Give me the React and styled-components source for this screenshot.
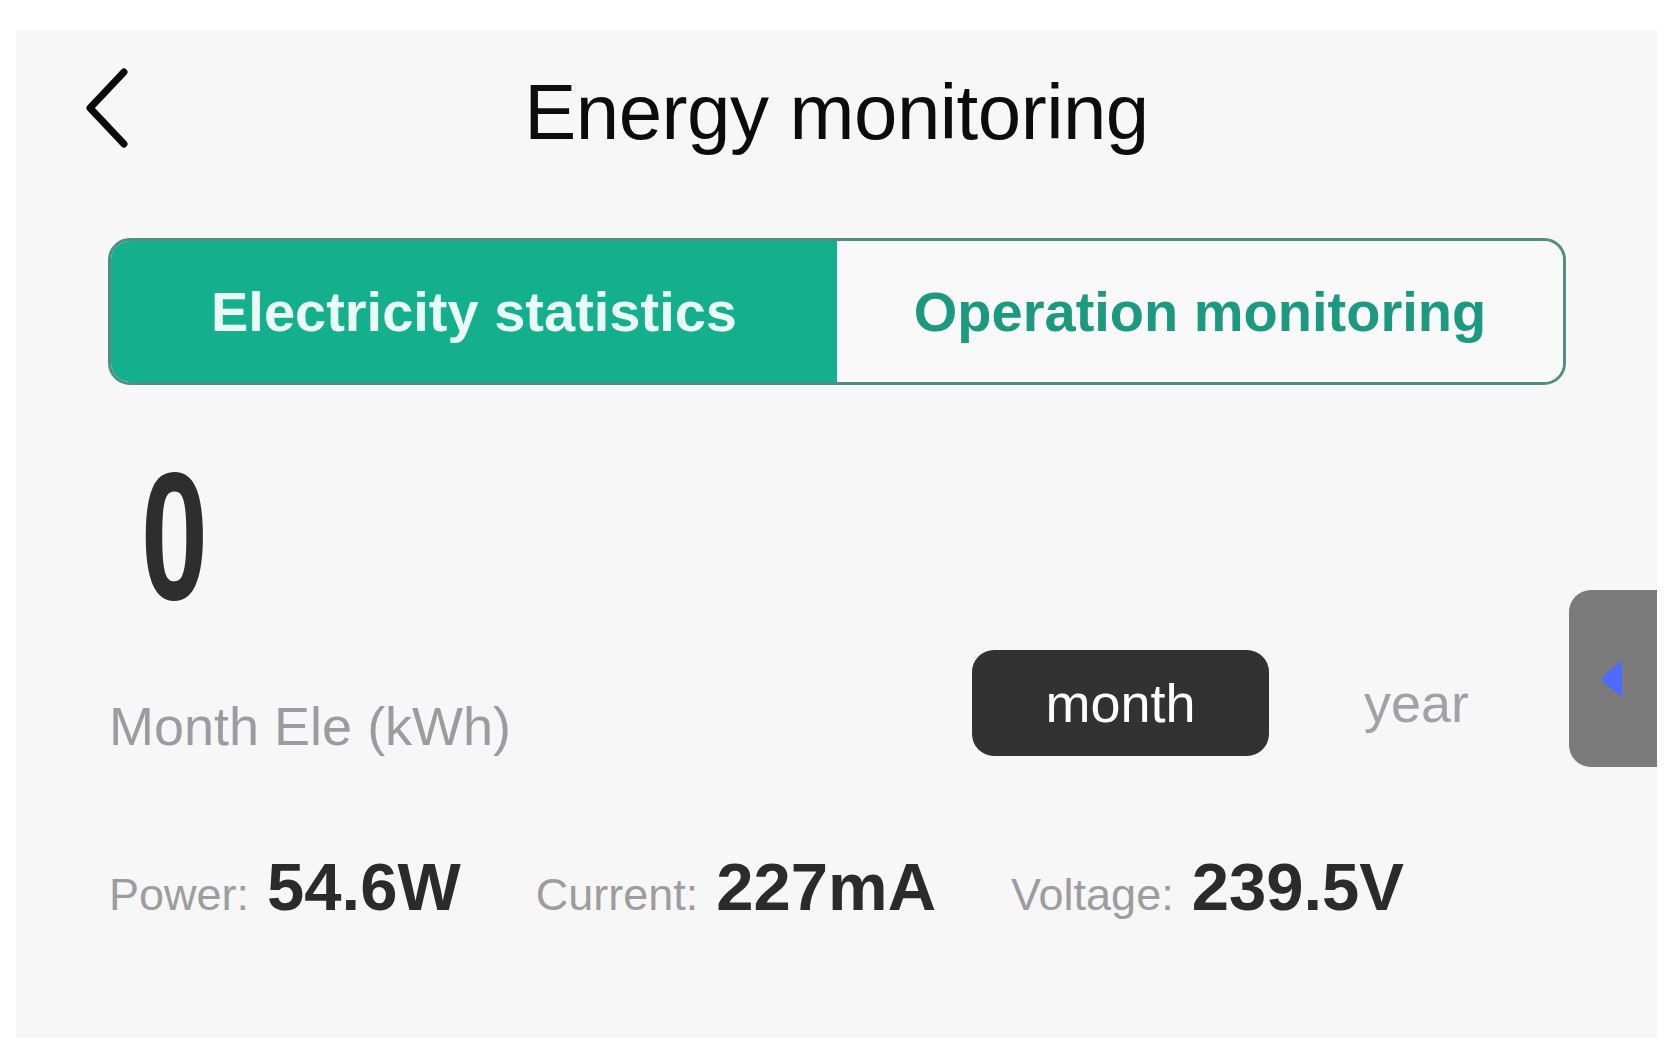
import styled, { createGlobalStyle } from "styled-components";

const GlobalStyle = createGlobalStyle`
  html, body {
    margin: 0;
    padding: 0;
    background: #ffffff;
    font-family: "Liberation Sans", Arial, sans-serif;
  }
`;

const stats = [
  { label: "Power:", value: "54.6W" },
  { label: "Current:", value: "227mA" },
  { label: "Voltage:", value: "239.5V" },
];

const App = () => {
  return (
    <>
      <GlobalStyle />
      <Panel>
        <Header>
          <BackButton aria-label="back">
            <svg width="46" height="80" viewBox="0 0 46 80">
              <polyline
                points="40,4 6,40 40,76"
                fill="none"
                stroke="#0a0a0a"
                strokeWidth="7"
                strokeLinecap="round"
                strokeLinejoin="round"
              />
            </svg>
          </BackButton>
          <Title>Energy monitoring</Title>
          <span />
        </Header>

        <Content>
          <Tabs>
            <Tab $active>Electricity statistics</Tab>
            <Tab>Operation monitoring</Tab>
          </Tabs>

          <BigValue>0</BigValue>

          <PeriodRow>
            <UnitLabel>Month Ele (kWh)</UnitLabel>
            <RangeGroup>
              <RangeButton $active>month</RangeButton>
              <RangeButton>year</RangeButton>
            </RangeGroup>
          </PeriodRow>

          <StatsRow>
            {stats.map((s) => (
              <Stat key={s.label}>
                <StatLabel>{s.label}</StatLabel>
                <StatValue>{s.value}</StatValue>
              </Stat>
            ))}
          </StatsRow>
        </Content>

        <SideHandle>
          <svg width="24" height="40" viewBox="0 0 24 40">
            <path d="M22 2 C12 10 2 17 2 20 C2 23 12 30 22 38 Z" fill="#4d6bfe" />
          </svg>
        </SideHandle>
      </Panel>
    </>
  );
};

export default App;

// Styles
const Panel = styled.div`
  position: relative;
  margin: 30px 18px 0 16px;
  width: 1641px;
  height: 1008px;
  background: #f7f7f7;
  box-sizing: border-box;
`;

const Header = styled.div`
  display: grid;
  grid-template-columns: 1fr auto 1fr;
  align-items: start;
  padding-top: 43px;
`;

const BackButton = styled.div`
  padding-left: 68px;
  margin-top: -5px;
  display: flex;
`;

const Title = styled.h1`
  margin: 0;
  font-size: 78px;
  line-height: 78px;
  font-weight: 400;
  color: #0c0c0c;
  letter-spacing: -0.5px;
`;

const Content = styled.div`
  padding: 87px 91px 0 92px;
`;

const Tabs = styled.div`
  display: grid;
  grid-template-columns: 1fr 1fr;
  height: 147px;
  border: 3px solid #4f8e81;
  border-radius: 22px;
  overflow: hidden;
  box-sizing: border-box;
`;

const Tab = styled.div`
  display: flex;
  align-items: center;
  justify-content: center;
  font-size: 56px;
  font-weight: 700;
  background: ${(p) => (p.$active ? "#14af8d" : "#f9f9f9")};
  color: ${(p) => (p.$active ? "#eafbf6" : "#1c9a7f")};
`;

const BigValue = styled.div`
  margin: 59px 0 0 33px;
  font-size: 182px;
  line-height: 184px;
  height: 184px;
  font-weight: 700;
  color: #2e2e2e;
  transform: scaleX(0.66);
  transform-origin: left center;
`;

const PeriodRow = styled.div`
  display: flex;
  align-items: flex-end;
  margin-top: 22px;
`;

const UnitLabel = styled.div`
  font-size: 54px;
  line-height: 54px;
  color: #9c9ca0;
  margin-bottom: 3px;
  padding-left: 1px;
`;

const RangeGroup = styled.div`
  margin-left: auto;
  display: flex;
  align-items: center;
  gap: 95px;
`;

const RangeButton = styled.div`
  height: 106px;
  display: flex;
  align-items: center;
  font-size: 54px;
  border-radius: 22px;
  ${(p) =>
    p.$active
      ? `
    width: 297px;
    justify-content: center;
    background: #323232;
    color: #ffffff;
  `
      : `
    width: 202px;
    color: #a2a2a4;
  `}
`;

const StatsRow = styled.div`
  display: flex;
  align-items: baseline;
  gap: 75px;
  margin-top: 97px;
  padding-left: 1px;
`;

const Stat = styled.div`
  display: flex;
  align-items: baseline;
  gap: 18px;
`;

const StatLabel = styled.span`
  font-size: 45px;
  color: #9d9da0;
`;

const StatValue = styled.span`
  font-size: 67px;
  line-height: 67px;
  font-weight: 700;
  color: #2b2b2b;
`;

const SideHandle = styled.div`
  position: absolute;
  right: 0;
  top: 560px;
  width: 88px;
  height: 177px;
  border-radius: 22px 0 0 22px;
  background: #7b7b7b;
  display: flex;
  align-items: center;
  padding-left: 31px;
  box-sizing: border-box;
`;
